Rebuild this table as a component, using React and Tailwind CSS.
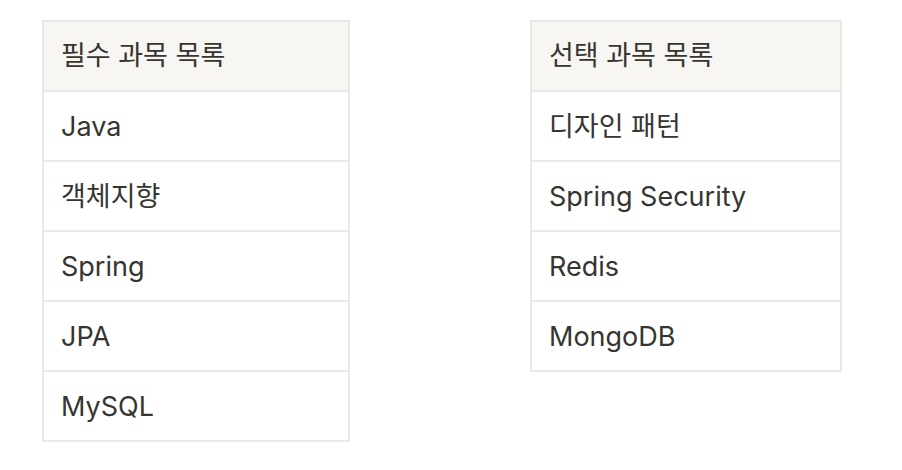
const required = ["Java", "객체지향", "Spring", "JPA", "MySQL"]
const optional = ["디자인 패턴", "Spring Security", "Redis", "MongoDB"]

const SubjectTable = ({ title, items, width }) => {
  return (
    <div className={`${width} flex flex-col border-2 border-[#e9e9e7]`}>
      <div className="h-[68px] flex items-center pl-[17px] bg-[#f7f6f3]">{title}</div>
      {items.map((item) => (
        <div key={item} className="h-[70px] flex items-center pl-[17px] pt-[2px] border-t-2 border-[#e9e9e7] bg-white">
          {item}
        </div>
      ))}
    </div>
  )
}

export default function App() {
  return (
    <div
      className="w-[902px] h-[470px] bg-white pt-[20px] pl-[42px] flex items-start gap-[180px] text-[27px] text-[#37352f]"
      style={{ fontFamily: 'Inter, "Noto Sans CJK KR", sans-serif' }}
    >
      <SubjectTable title="필수 과목 목록" items={required} width="w-[308px]" />
      <SubjectTable title="선택 과목 목록" items={optional} width="w-[312px]" />
    </div>
  )
}
